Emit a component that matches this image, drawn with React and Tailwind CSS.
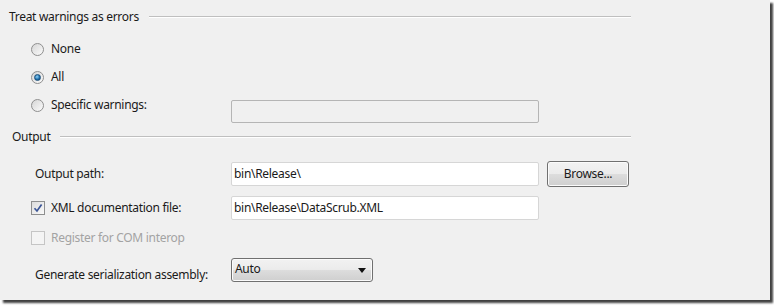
import React from "react";

const font = { fontFamily: '"Noto Sans", "Segoe UI", sans-serif' };

function Radio({ checked }) {
  return (
    <span className="relative inline-flex h-[13px] w-[13px] shrink-0 items-center justify-center rounded-full border border-[#8f8f8f] bg-[linear-gradient(135deg,#d6d6d6,#fbfbfb)]">
      {checked && (
        <span className="h-[7px] w-[7px] rounded-full border border-[#1b4f7a] bg-[radial-gradient(circle_at_40%_35%,#8fd3f7,#1a6aa8_60%,#0f3f66)]" />
      )}
    </span>
  );
}

function Checkbox({ checked, disabled }) {
  return (
    <span
      className={
        "inline-flex h-[14px] w-[14px] shrink-0 items-center justify-center border " +
        (disabled
          ? "border-[#c5c5c5] bg-[#f4f4f4]"
          : "border-[#8e8f8f] bg-[linear-gradient(135deg,#dcdcdc,#fafafa)]")
      }
    >
      {checked && (
        <svg width="10" height="10" viewBox="0 0 10 10">
          <path d="M1.5 5.2 L4 8 L8.6 1.6" fill="none" stroke="#3b5596" strokeWidth="1.7" />
        </svg>
      )}
    </span>
  );
}

function GroupHeader({ text, pl }) {
  return (
    <div className={"flex h-[18px] items-center pr-[139px] " + pl}>
      <span className="text-[12px] text-[#1a1a1a]">{text}</span>
      <div className="ml-[10px] h-[2px] flex-1 border-t border-b border-t-[#bfbfbf] border-b-white" />
    </div>
  );
}

export default function App() {
  return (
    <div className="h-[306px] w-[774px] bg-white" style={font}>
      <div className="flex h-[300px] w-[770px] flex-col bg-[#f0f0f0] text-[12px] tracking-[-0.3px] text-[#1a1a1a] shadow-[3px_3px_2px_rgba(0,0,0,0.75)]">
        <div className="mt-[8px]">
          <GroupHeader text="Treat warnings as errors" pl="pl-[9px]" />
        </div>
        <div className="mt-[9px] flex flex-col">
          <div className="flex h-[28px] items-center pl-[31px]">
            <Radio />
            <span className="ml-[7px]">None</span>
          </div>
          <div className="flex h-[28px] items-center pl-[31px]">
            <Radio checked />
            <span className="ml-[7px]">All</span>
          </div>
          <div className="flex h-[28px] items-center pl-[31px]">
            <div className="flex w-[200px] items-center">
              <Radio />
              <span className="ml-[7px]">Specific warnings:</span>
            </div>
            <div className="mt-[12px] h-[23px] w-[308px] rounded-[2px] border border-[#b5b5b5] bg-[#f0f0f0]" />
          </div>
        </div>
        <div className="mt-[9px]">
          <GroupHeader text="Output" pl="pl-[12px]" />
        </div>
        <div className="mt-[15px] flex h-[26px] items-center pl-[35px]">
          <span className="w-[196px]">Output path:</span>
          <div className="flex h-[24px] w-[308px] items-center rounded-[2px] border border-[#d6d6d6] bg-white pl-[2px]">
            bin\Release\
          </div>
          <div className="ml-[8px] flex h-[26px] w-[82px] items-center justify-center rounded-[3px] border border-[#707070] bg-[linear-gradient(#f2f2f2_0%,#ebebeb_50%,#dddddd_50%,#cfcfcf_100%)] shadow-[inset_0_0_0_1px_#fbfbfb]">
            Browse...
          </div>
        </div>
        <div className="mt-[8px] flex h-[26px] items-center pl-[31px]">
          <div className="flex w-[200px] items-center">
            <Checkbox checked />
            <span className="ml-[6px]">XML documentation file:</span>
          </div>
          <div className="flex h-[24px] w-[308px] items-center rounded-[2px] border border-[#d6d6d6] bg-white pl-[2px]">
            bin\Release\DataScrub.XML
          </div>
        </div>
        <div className="mt-[4px] flex h-[26px] items-center pl-[31px]">
          <Checkbox disabled />
          <span className="ml-[6px] text-[#a3a3a3]">Register for COM interop</span>
        </div>
        <div className="mt-[7px] flex h-[24px] items-center pl-[35px]">
          <span className="mt-[9px] w-[196px]">Generate serialization assembly:</span>
          <div className="flex h-[24px] w-[142px] items-center justify-between rounded-[3px] border border-[#707070] bg-[linear-gradient(#f2f2f2_0%,#ebebeb_50%,#dddddd_50%,#cfcfcf_100%)] pl-[3px] pr-[6px] shadow-[inset_0_0_0_1px_#fbfbfb]">
            <span className="-mt-[3px]">Auto</span>
            <svg width="8" height="5" viewBox="0 0 8 5">
              <path d="M0 0 H8 L4 5 Z" fill="#111" />
            </svg>
          </div>
        </div>
      </div>
    </div>
  );
}
